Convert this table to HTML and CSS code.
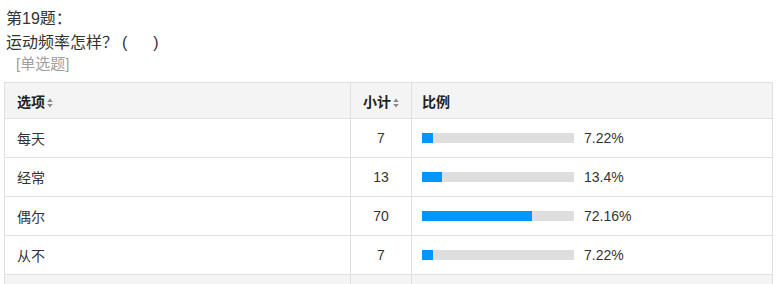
FILE: index.html
```html
<!DOCTYPE html>
<html lang="zh">
<head>
<meta charset="utf-8">
<link rel="stylesheet" href="styles.css">
</head>
<body>
<div class="question">
  <div class="q-title">第19题<span class="punct">：</span></div>
  <div class="q-text">运动频率怎样<span class="punct">？</span><span class="paren">(</span><span class="blank"></span>)</div>
  <div class="q-type">[单选题]</div>
</div>
<table class="stats">
  <colgroup>
    <col class="w-opt">
    <col class="w-num">
    <col class="w-pct">
  </colgroup>
  <thead>
    <tr>
      <th class="c-opt">选项<svg class="sort" width="6" height="10" viewBox="0 0 6 10"><path d="M3 0.5 L5.8 4 H0.2 Z M3 9.5 L5.8 6 H0.2 Z" fill="#8a8a8a"/></svg></th>
      <th class="c-num">小计<svg class="sort" width="6" height="10" viewBox="0 0 6 10"><path d="M3 0.5 L5.8 4 H0.2 Z M3 9.5 L5.8 6 H0.2 Z" fill="#8a8a8a"/></svg></th>
      <th class="c-pct">比例</th>
    </tr>
  </thead>
  <tbody>
    <tr>
      <td class="c-opt">每天</td>
      <td class="c-num">7</td>
      <td class="c-pct"><div class="bar-wrap"><div class="bar"><div class="fill" style="width:7.22%"></div></div><span class="pct">7.22%</span></div></td>
    </tr>
    <tr>
      <td class="c-opt">经常</td>
      <td class="c-num">13</td>
      <td class="c-pct"><div class="bar-wrap"><div class="bar"><div class="fill" style="width:13.4%"></div></div><span class="pct">13.4%</span></div></td>
    </tr>
    <tr>
      <td class="c-opt">偶尔</td>
      <td class="c-num">70</td>
      <td class="c-pct"><div class="bar-wrap"><div class="bar"><div class="fill" style="width:72.16%"></div></div><span class="pct">72.16%</span></div></td>
    </tr>
    <tr>
      <td class="c-opt">从不</td>
      <td class="c-num">7</td>
      <td class="c-pct"><div class="bar-wrap"><div class="bar"><div class="fill" style="width:7.22%"></div></div><span class="pct">7.22%</span></div></td>
    </tr>
    <tr class="total">
      <td class="c-opt"></td>
      <td class="c-num"></td>
      <td class="c-pct"></td>
    </tr>
  </tbody>
</table>
</body>
</html>
```
FILE: styles.css
```css
html, body {
  margin: 0;
  padding: 0;
  background: #ffffff;
}
body {
  font-family: "Liberation Sans", "Noto Sans CJK SC", sans-serif;
  color: #333333;
  padding: 6px 0 0 4px;
}
.question {
  padding-left: 2px;
  font-size: 16px;
  line-height: 22px;
  color: #333333;
}
.punct {
  font-family: "Noto Sans CJK TC", sans-serif;
}
.paren {
  margin-left: 4px;
}
.blank {
  display: inline-block;
  width: 26px;
}
.q-type {
  color: #a0a0a0;
  padding-left: 10px;
  line-height: 20px;
  font-size: 15px;
}
.stats {
  margin-top: 8px;
  width: 768px;
  border-collapse: collapse;
  font-size: 14px;
  table-layout: fixed;
}
.w-opt { width: 346px; }
.w-num { width: 61px; }
.w-pct { width: 361px; }
.stats th, .stats td {
  border: 1px solid #e0e0e0;
  padding: 0 0 0 12px;
  text-align: left;
  vertical-align: middle;
}
.stats th {
  height: 35px;
  background: #f4f4f4;
  font-weight: bold;
  color: #222222;
}
.stats td {
  height: 38px;
}
.stats .c-num {
  text-align: center;
  padding: 0;
}
.stats .c-pct {
  padding-left: 10px;
}
.sort {
  margin-left: 2px;
  vertical-align: -1px;
}
.bar-wrap {
  display: flex;
  align-items: center;
}
.bar {
  width: 152px;
  height: 10px;
  background: #dedede;
}
.fill {
  height: 100%;
  background: #0096ff;
}
.pct {
  margin-left: 10px;
}
.total td {
  background: #f4f4f4;
}
```
